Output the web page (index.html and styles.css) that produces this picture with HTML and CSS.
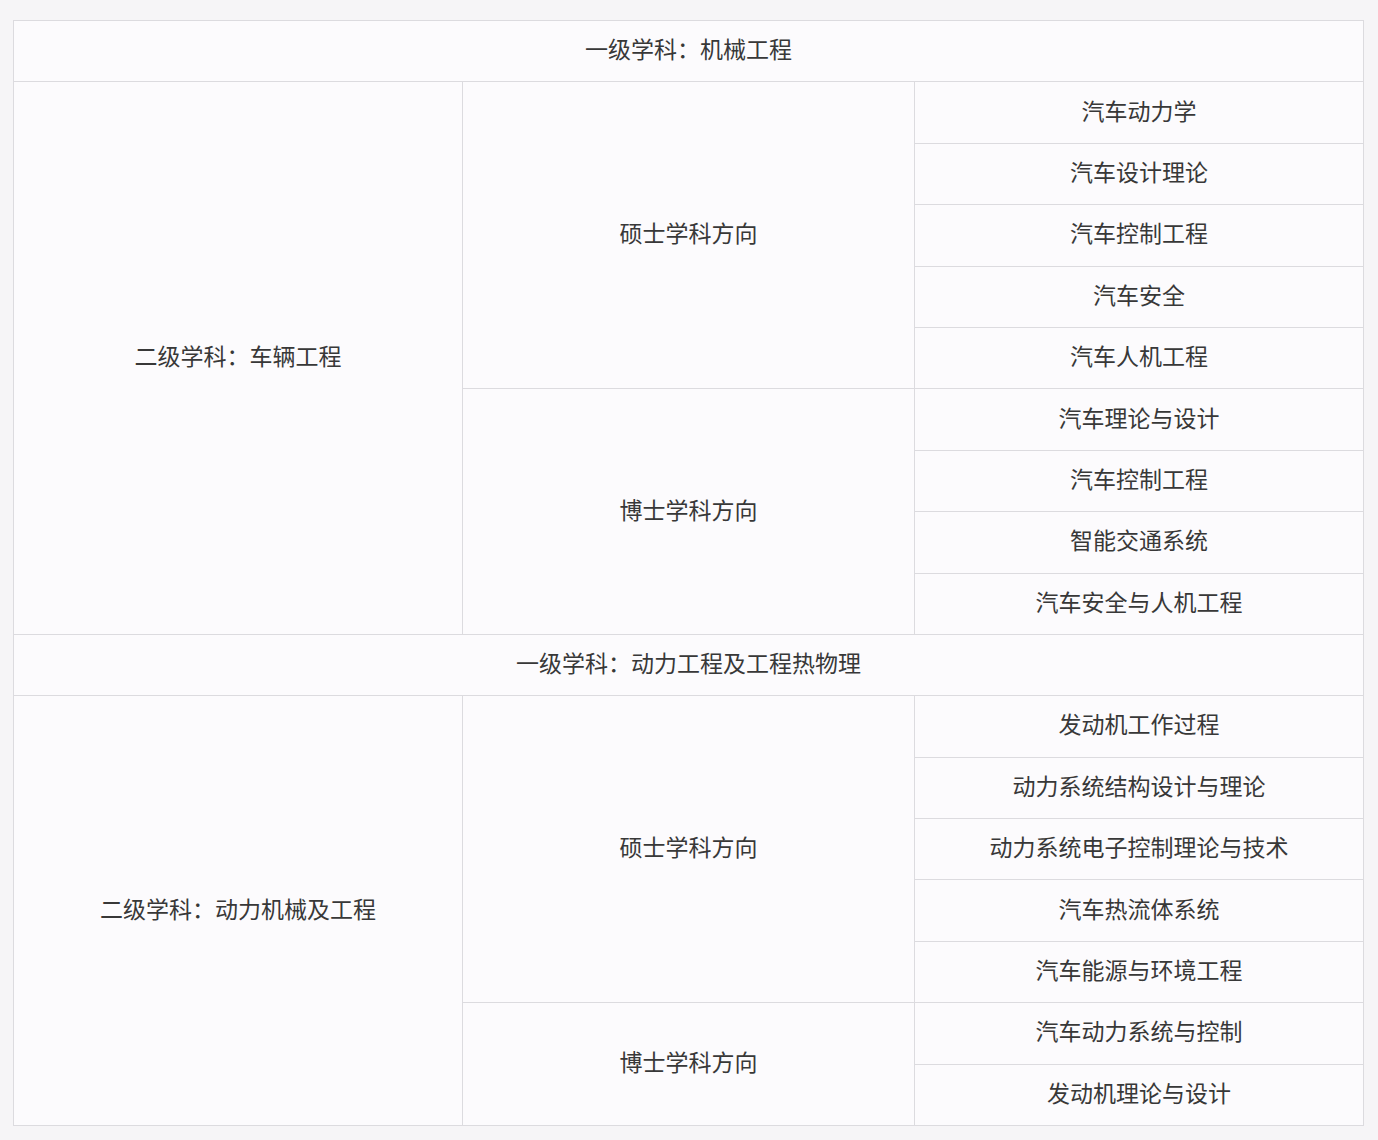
FILE: index.html
```html
<!DOCTYPE html>
<html lang="zh-CN">
<head>
<meta charset="utf-8">
<title>学科方向</title>
<link rel="stylesheet" href="styles.css">
</head>
<body>
<table class="subjects">
  <colgroup>
    <col class="c1"><col class="c2"><col class="c3">
  </colgroup>
  <tbody>
    <tr><td colspan="3">一级学科：机械工程</td></tr>
    <tr><td rowspan="9">二级学科：车辆工程</td><td rowspan="5">硕士学科方向</td><td>汽车动力学</td></tr>
    <tr><td>汽车设计理论</td></tr>
    <tr><td>汽车控制工程</td></tr>
    <tr><td>汽车安全</td></tr>
    <tr><td>汽车人机工程</td></tr>
    <tr><td rowspan="4">博士学科方向</td><td>汽车理论与设计</td></tr>
    <tr><td>汽车控制工程</td></tr>
    <tr><td>智能交通系统</td></tr>
    <tr><td>汽车安全与人机工程</td></tr>
    <tr><td colspan="3">一级学科：动力工程及工程热物理</td></tr>
    <tr><td rowspan="7">二级学科：动力机械及工程</td><td rowspan="5">硕士学科方向</td><td>发动机工作过程</td></tr>
    <tr><td>动力系统结构设计与理论</td></tr>
    <tr><td>动力系统电子控制理论与技术</td></tr>
    <tr><td>汽车热流体系统</td></tr>
    <tr><td>汽车能源与环境工程</td></tr>
    <tr><td rowspan="2">博士学科方向</td><td>汽车动力系统与控制</td></tr>
    <tr><td>发动机理论与设计</td></tr>
  </tbody>
</table>
</body>
</html>
```

FILE: styles.css
```css
html, body {
  margin: 0;
  padding: 0;
  background: #f6f5f7;
}
body {
  padding: 20px 0 0 13px;
  font-family: "Noto Sans CJK SC", "Noto Sans", sans-serif;
  color: #383838;
}
.subjects {
  width: 1350px;
  border-collapse: collapse;
  table-layout: fixed;
  background: #fcfbfd;
  border: 1px solid #dcdbdf;
}
.c1 { width: 449px; }
.c2 { width: 452px; }
.c3 { width: 449px; }
.subjects td {
  border: 1px solid #dcdbdf;
  height: 54.4px;
  padding: 0 0 6px 0;
  text-align: center;
  vertical-align: middle;
  font-size: 23px;
  line-height: 28px;
  font-weight: 400;
}
```
